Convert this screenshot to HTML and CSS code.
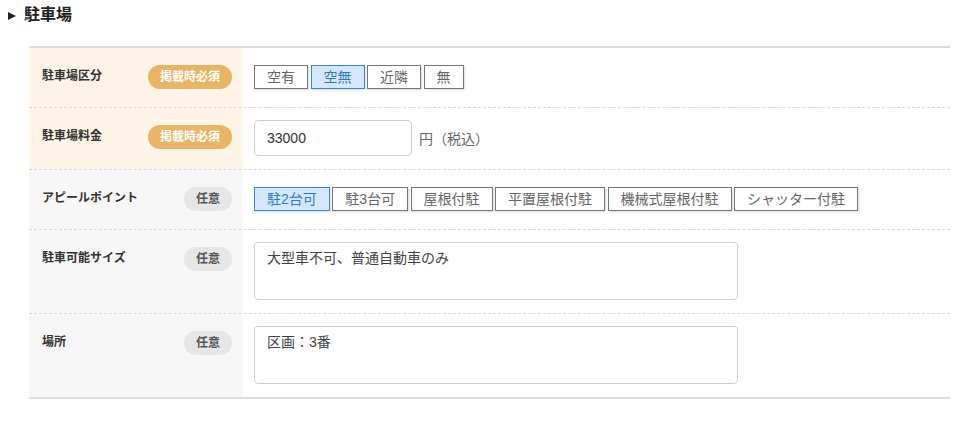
FILE: index.html
```html
<!DOCTYPE html>
<html lang="ja">
<head>
    <meta charset="UTF-8">
    <meta name="viewport" content="width=device-width, initial-scale=1.0">
    <title>駐車場</title>
    <link rel="stylesheet" href="styles.css">
</head>
<body>
    <h2 class="section-title"><span class="arrow"></span>駐車場</h2>

    <div class="form-table">
        <!-- 駐車場区分 -->
        <div class="form-row">
            <div class="form-label required">
                <span class="label-text">駐車場区分</span>
                <span class="badge badge-required">掲載時必須</span>
            </div>
            <div class="form-value">
                <div class="choice-group">
                    <button class="choice">空有</button>
                    <button class="choice selected">空無</button>
                    <button class="choice">近隣</button>
                    <button class="choice">無</button>
                </div>
            </div>
        </div>

        <!-- 駐車場料金 -->
        <div class="form-row">
            <div class="form-label required">
                <span class="label-text">駐車場料金</span>
                <span class="badge badge-required">掲載時必須</span>
            </div>
            <div class="form-value">
                <input class="text-input" type="text" value="33000">
                <span class="unit">円（税込）</span>
            </div>
        </div>

        <!-- アピールポイント -->
        <div class="form-row">
            <div class="form-label">
                <span class="label-text">アピールポイント</span>
                <span class="badge">任意</span>
            </div>
            <div class="form-value">
                <div class="choice-group">
                    <button class="choice selected">駐2台可</button>
                    <button class="choice">駐3台可</button>
                    <button class="choice">屋根付駐</button>
                    <button class="choice">平置屋根付駐</button>
                    <button class="choice">機械式屋根付駐</button>
                    <button class="choice">シャッター付駐</button>
                </div>
            </div>
        </div>

        <!-- 駐車可能サイズ -->
        <div class="form-row">
            <div class="form-label">
                <span class="label-text">駐車可能サイズ</span>
                <span class="badge">任意</span>
            </div>
            <div class="form-value">
                <textarea class="text-area">大型車不可、普通自動車のみ</textarea>
            </div>
        </div>

        <!-- 場所 -->
        <div class="form-row">
            <div class="form-label">
                <span class="label-text">場所</span>
                <span class="badge">任意</span>
            </div>
            <div class="form-value">
                <textarea class="text-area">区画：3番</textarea>
            </div>
        </div>
    </div>
</body>
</html>
```

FILE: styles.css
```css
body {
    margin: 0;
    padding: 0 8px;
    font-family: "Liberation Sans", "Noto Sans CJK JP", sans-serif;
    color: #333;
    background-color: #fff;
}
.section-title {
    display: flex;
    align-items: center;
    margin: 0 0 21px;
    padding-top: 5px;
    font-size: 16px;
    line-height: 20px;
    font-weight: bold;
    color: #222;
}
.arrow {
    width: 0;
    height: 0;
    margin: 2px 8px 0 0;
    border-left: 8px solid #222;
    border-top: 4.5px solid transparent;
    border-bottom: 4.5px solid transparent;
}
.form-table {
    width: 921px;
    margin-left: 21px;
    border-top: 2px solid #ddd;
    border-bottom: 2px solid #ddd;
}
.form-row {
    display: flex;
    border-bottom: 1px dashed #d6d6d6;
}
.form-row:last-child {
    border-bottom: none;
}
.form-label {
    display: flex;
    justify-content: space-between;
    align-items: flex-start;
    width: 214px;
    box-sizing: border-box;
    padding: 17px 11px 18px 13px;
    background-color: #f7f7f7;
}
.form-label.required {
    background-color: #fdf3e6;
}
.label-text {
    font-size: 12px;
    font-weight: bold;
    line-height: 22px;
    color: #333;
}
.badge {
    height: 24px;
    padding: 0 12px;
    border-radius: 12px;
    background-color: #e6e6e6;
    color: #555;
    font-size: 12px;
    font-weight: bold;
    line-height: 24px;
}
.badge-required {
    background-color: #e9b466;
    color: #fff;
}
.form-value {
    flex: 1;
    display: flex;
    align-items: center;
    padding: 12px 11px 13px;
}
.choice-group {
    display: flex;
    gap: 2.5px;
}
.choice {
    height: 24px;
    padding: 0 12px;
    border: 1px solid #777;
    background-color: #fff;
    color: #666;
    font-family: inherit;
    font-size: 14px;
    line-height: 22px;
    box-shadow: 1px 1px 2px rgba(0,0,0,0.15);
    cursor: pointer;
}
.choice.selected {
    border-color: #3a86c6;
    background-color: #d5e7fc;
    color: #2f7bc0;
}
.text-input {
    width: 158px;
    height: 36px;
    box-sizing: border-box;
    padding: 0 12px;
    border: 1px solid #ccd0d6;
    border-radius: 4px;
    font-family: inherit;
    font-size: 14px;
    color: #333;
}
.unit {
    margin-left: 7px;
    font-size: 14px;
    color: #666;
}
.text-area {
    display: block;
    width: 484px;
    height: 58px;
    box-sizing: border-box;
    padding: 5px 12px;
    border: 1px solid #ccd0d6;
    border-radius: 4px;
    font-family: inherit;
    font-size: 14px;
    line-height: 20px;
    color: #444;
    resize: none;
}
```
